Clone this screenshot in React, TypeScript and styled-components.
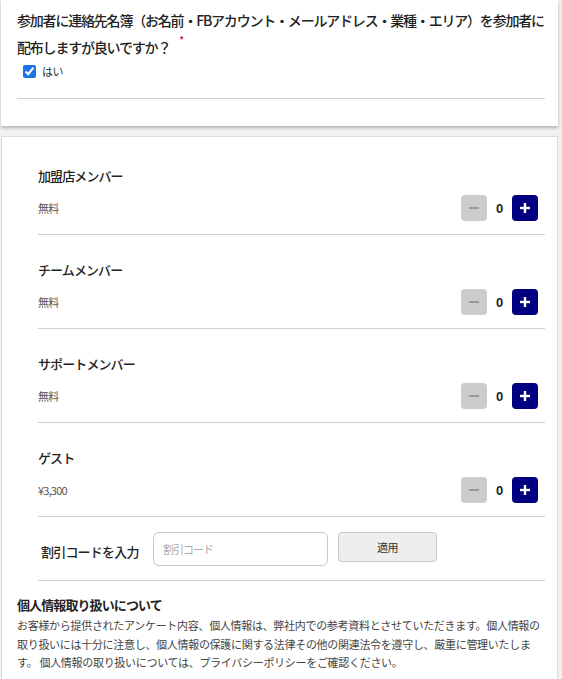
import styled, { createGlobalStyle } from "styled-components";

const GlobalStyle = createGlobalStyle`
  body {
    margin: 0;
    background: #f1f1f1;
    font-family: "Noto Sans CJK JP", "Liberation Sans", sans-serif;
    color: #222;
  }
`;

const members = [
  { name: "加盟店メンバー", price: "無料" },
  { name: "チームメンバー", price: "無料" },
  { name: "サポートメンバー", price: "無料" },
  { name: "ゲスト", price: "¥3,300" },
];

const Page = styled.div`
  width: 557px;
  margin-left: 1px;
  display: flex;
  flex-direction: column;
  gap: 10px;
`;

const QuestionCard = styled.section`
  background: #fff;
  padding: 7px 13px 27px 16px;
  box-shadow: 0 2px 3px rgba(0, 0, 0, 0.25);
`;

const Question = styled.div`
  font-size: 14px;
  line-height: 27px;
  font-weight: 500;
  letter-spacing: -1.2px;
`;

const Required = styled.span`
  color: #d0021b;
  font-size: 10px;
  margin-left: 9px;
  vertical-align: 9px;
  line-height: 0;
`;

const CheckRow = styled.label`
  display: flex;
  align-items: center;
  gap: 6px;
  height: 20px;
  padding-left: 6px;
  font-size: 11px;
  letter-spacing: -0.5px;
  color: #333;
`;

const Check = styled.input`
  width: 13px;
  height: 13px;
  margin: 0;
  accent-color: #1a73e8;
`;

const Divider = styled.hr`
  border: none;
  border-top: 1px solid #cfcfcf;
  margin: 0;
`;

const QuestionDivider = styled(Divider)`
  margin-top: 17px;
`;

const TicketCard = styled.section`
  background: #fff;
  border: 1px solid #dcdcdc;
  border-bottom: none;
  padding: 29px 12px 20px 15px;
`;

const TicketList = styled.div`
  margin-left: 21px;
  display: flex;
  flex-direction: column;
`;

const Ticket = styled.div`
  display: flex;
  flex-direction: column;
  & + & {
    margin-top: 25px;
  }
`;

const TicketName = styled.div`
  font-size: 13px;
  line-height: 20px;
  font-weight: 500;
  letter-spacing: -0.9px;
`;

const TicketRow = styled.div`
  display: flex;
  align-items: center;
  justify-content: space-between;
  margin-top: 9px;
  padding-right: 7px;
  padding-bottom: 13px;
  border-bottom: 1px solid #cfcfcf;
`;

const Price = styled.span`
  font-size: 11px;
  color: #555;
  letter-spacing: -0.8px;
`;

const Counter = styled.div`
  display: flex;
  align-items: center;
`;

const StepButton = styled.button<{ $primary?: boolean }>`
  width: 26px;
  height: 26px;
  padding: 0;
  border: none;
  border-radius: 4px;
  display: flex;
  align-items: center;
  justify-content: center;
  background: ${({ $primary }) => ($primary ? "#000080" : "#cccccc")};
  color: ${({ $primary }) => ($primary ? "#fff" : "#9a9a9a")};
`;

const Count = styled.span`
  width: 25px;
  text-align: center;
  font-family: "Liberation Sans", sans-serif;
  font-weight: 700;
  font-size: 13px;
`;

const DiscountRow = styled.div`
  display: flex;
  align-items: flex-start;
  margin-top: 15px;
  padding-left: 3px;
  padding-bottom: 14px;
  border-bottom: 1px solid #cfcfcf;
`;

const DiscountLabel = styled.span`
  font-size: 13px;
  font-weight: 500;
  letter-spacing: -0.8px;
  margin-top: 10px;
  width: 112px;
`;

const CodeInput = styled.input`
  width: 175px;
  height: 34px;
  box-sizing: border-box;
  border: 1px solid #c8c8c8;
  border-radius: 6px;
  padding: 0 9px;
  font-family: inherit;
  font-size: 11px;
  letter-spacing: -1px;
  &::placeholder {
    color: #aaa;
  }
`;

const ApplyButton = styled.button`
  width: 99px;
  height: 30px;
  margin-left: 10px;
  background: #eeeeee;
  border: 1px solid #c8c8c8;
  border-radius: 4px;
  font-family: inherit;
  font-size: 11px;
  letter-spacing: -0.5px;
  color: #333;
`;

const PrivacyTitle = styled.h3`
  margin: 14px 0 0;
  font-size: 13px;
  line-height: 20px;
  font-weight: 700;
  letter-spacing: -0.9px;
`;

const PrivacyText = styled.p`
  margin: 1px 0 0;
  font-size: 11px;
  line-height: 18.5px;
  color: #444;
  letter-spacing: -0.3px;
`;

function Minus() {
  return (
    <svg width="12" height="12" viewBox="0 0 12 12">
      <rect x="1" y="5" width="10" height="2" fill="currentColor" />
    </svg>
  );
}

function Plus() {
  return (
    <svg width="12" height="12" viewBox="0 0 12 12">
      <rect x="1" y="4.8" width="10" height="2.4" fill="currentColor" />
      <rect x="4.8" y="1" width="2.4" height="10" fill="currentColor" />
    </svg>
  );
}

export default function App() {
  return (
    <>
      <GlobalStyle />
      <Page>
        <QuestionCard>
          <Question>
            参加者に連絡先名簿（お名前・FBアカウント・メールアドレス・業種・エリア）を参加者に配布しますが良いですか？
            <Required>*</Required>
          </Question>
          <CheckRow>
            <Check type="checkbox" defaultChecked />
            はい
          </CheckRow>
          <QuestionDivider />
        </QuestionCard>

        <TicketCard>
          <TicketList>
            {members.map((m) => (
              <Ticket key={m.name}>
                <TicketName>{m.name}</TicketName>
                <TicketRow>
                  <Price>{m.price}</Price>
                  <Counter>
                    <StepButton>
                      <Minus />
                    </StepButton>
                    <Count>0</Count>
                    <StepButton $primary>
                      <Plus />
                    </StepButton>
                  </Counter>
                </TicketRow>
              </Ticket>
            ))}
            <DiscountRow>
              <DiscountLabel>割引コードを入力</DiscountLabel>
              <CodeInput placeholder="割引コード" />
              <ApplyButton>適用</ApplyButton>
            </DiscountRow>
          </TicketList>
          <PrivacyTitle>個人情報取り扱いについて</PrivacyTitle>
          <PrivacyText>
            お客様から提供されたアンケート内容、個人情報は、弊社内での参考資料とさせていただきます。個人情報の取り扱いには十分に注意し、個人情報の保護に関する法律その他の関連法令を遵守し、厳重に管理いたします。
            個人情報の取り扱いについては、プライバシーポリシーをご確認ください。
          </PrivacyText>
        </TicketCard>
      </Page>
    </>
  );
}
